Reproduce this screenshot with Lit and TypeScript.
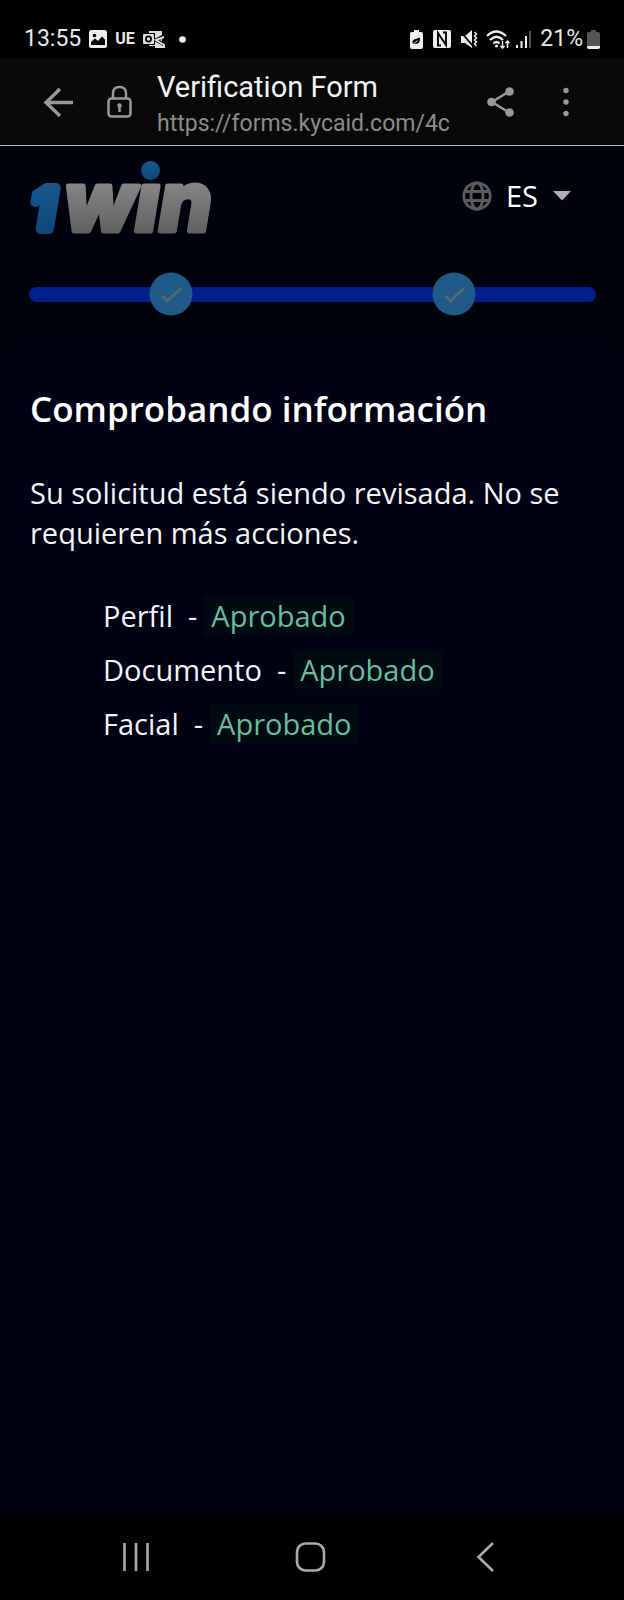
import { LitElement, html, css, svg } from "lit";
import { customElement, state } from "lit/decorators.js";

interface Check {
  name: string;
  status: string;
}

@customElement("status-bar")
class StatusBar extends LitElement {
  static styles = css`
    :host {
      display: flex;
      align-items: center;
      justify-content: space-between;
      box-sizing: border-box;
      height: 58px;
      padding: 20px 24px 0 24px;
      background: #000;
      color: #e8e8e8;
      font: 23px/38px Roboto, sans-serif;
    }
    .group {
      display: flex;
      align-items: center;
    }
    .left {
      gap: 8px;
    }
    .region {
      font: 700 16px/38px Roboto, sans-serif;
    }
    .level {
      margin-left: 9px;
      margin-right: 4px;
    }
    svg {
      display: block;
    }
    .dot {
      margin-left: 6px;
    }
    .eco {
      margin-right: 10px;
    }
    .nfc {
      margin-right: 9px;
    }
    .mute {
      margin-right: 8px;
    }
    .wifi {
      margin-right: 6px;
    }
  `;

  render() {
    return html`
      <div class="group left">
        <span class="time">13:55</span>
        <svg width="18" height="18" viewBox="0 0 18 18">
          <rect width="18" height="18" rx="2.5" fill="#eee" />
          <circle cx="5.5" cy="5.5" r="1.8" fill="#000" />
          <path d="M2 15v-3l4-3.500 3 2.500 4-4.500 3 3v5.500z" fill="#000" />
        </svg>
        <span class="region">UE</span>
        <svg width="22" height="18" viewBox="0 0 22 18">
          <path d="M6 1h13v15H6z" fill="#ddd" />
          <path d="M22 5.500l-9 4.500 9 5" fill="none" stroke="#000" stroke-width="3.600" />
          <rect x="-1" y="3" width="13" height="12" fill="#000" />
          <rect x="0" y="4" width="11" height="10" rx="1" fill="#ddd" />
          <circle cx="5.500" cy="9" r="2.600" fill="none" stroke="#000" stroke-width="1.700" />
          <path d="M21 7l-8 3 8 5v2H12" fill="none" stroke="#ddd" stroke-width="2" />
        </svg>
        <svg class="dot" width="7" height="7" viewBox="0 0 7 7"><circle cx="3.500" cy="3.500" r="3.300" fill="#eee" /></svg>
      </div>
      <div class="group">
        <svg class="eco" width="13" height="19" viewBox="0 0 13 19">
          <path d="M4 0h5v2h2.500Q13 2 13 4v13q0 2-2 2H2q-2 0-2-2V4q0-2 1.500-2H4z" fill="#eee" />
          <path d="M2.500 13.500q-.5-4 3-4.500L10 7.500q.5 6-4 6.500l-2-.2z" fill="#000" />
          <path d="M3 14.500l4.500-4" stroke="#eee" />
        </svg>
        <svg class="nfc" width="18" height="18" viewBox="0 0 18 18">
          <rect width="18" height="18" rx="2" fill="#eee" />
          <path d="M8 15.500H5V3l8 12V2.500h-3" fill="none" stroke="#000" stroke-width="1.900" />
        </svg>
        <svg class="mute" width="18" height="18" viewBox="0 0 18 18">
          <path d="M1 6h4l7-6v18l-7-5H1z" fill="#eee" />
          <path d="M0 1l13 15" stroke="#000" stroke-width="1.800" />
          <path d="M14.500 2l2 2-2 2 2 2-2 2 2 2-2 2 2 2" fill="none" stroke="#eee" stroke-width="1.500" />
        </svg>
        <svg class="wifi" width="24" height="19" viewBox="0 0 24 19" fill="none" stroke="#eee" stroke-width="2.300">
          <path d="M1 6q9-9 19 0M4 10q6.500-6.500 13 0M7.500 13.500q3-3 6 0" />
          <circle cx="10.500" cy="16" r="1.500" fill="#eee" stroke="none" />
          <path d="M16.500 11v7M14.500 16l2 2 2-2M21.500 18v-7M19.500 13l2-2 2 2" stroke-width="1.500" />
        </svg>
        <svg width="15" height="18" viewBox="0 0 15 18">
          <path d="M1 15v3M5.500 11v7M10 6v12" stroke="#eee" stroke-width="2" />
          <path d="M14 1v17" stroke="#555" stroke-width="2" />
        </svg>
        <span class="level">21%</span>
        <svg width="13" height="19" viewBox="0 0 13 19">
          <path d="M4 0h5v2h2q2 0 2 2v13q0 2-2 2H2q-2 0-2-2V4q0-2 2-2h2z" fill="#555" />
          <path d="M0 16h13v1q0 2-2 2H2q-2 0-2-2z" fill="#eee" />
        </svg>
      </div>
    `;
  }
}

@customElement("browser-bar")
class BrowserBar extends LitElement {
  static styles = css`
    :host {
      display: flex;
      align-items: center;
      box-sizing: border-box;
      height: 88px;
      padding: 0 40px;
      background: #090909;
      border-bottom: 1px solid #a9bfc0;
      font-family: Roboto, sans-serif;
    }
    button {
      display: flex;
      padding: 0;
      border: 0;
      background: none;
      color: #999;
    }
    svg {
      display: block;
    }
    .lock {
      margin-left: 31px;
    }
    .page {
      flex: 1;
      min-width: 0;
      margin-left: 24px;
      padding-top: 8px;
      white-space: nowrap;
    }
    .title {
      color: #f4f4f4;
      font-size: 29px;
      line-height: 36px;
    }
    .url {
      color: #8c8c8c;
      font-size: 23px;
      line-height: 38px;
    }
    .more {
      margin-left: 34px;
    }
  `;

  render() {
    return html`
      <button aria-label="Atrás">
        <svg width="36" height="36" viewBox="0 0 36 36" fill="none" stroke="currentColor" stroke-width="3.400">
          <path d="M20 5L6 18.500 20 32M6 18.500h27" />
        </svg>
      </button>
      <button class="lock" aria-label="Seguridad">
        <svg width="26" height="36" viewBox="0 0 26 36" fill="none" stroke="currentColor" stroke-width="2.500">
          <rect x="1.500" y="14.500" width="22" height="18" rx="3" />
          <path d="M6 14V9.500q0-6.500 6.500-6.500T19 9.500V14" />
          <path d="M12.500 22v6" /><circle cx="12.500" cy="21.500" r="1" />
        </svg>
      </button>
      <div class="page">
        <div class="title">Verification Form</div>
        <div class="url">https://forms.kycaid.com/4c</div>
      </div>
      <button aria-label="Compartir">
        <svg width="27" height="32" viewBox="0 0 27 32" fill="currentColor">
          <path d="M22 5.500L5 16l17 10.500" fill="none" stroke="currentColor" stroke-width="2.600" />
          <circle cx="4.500" cy="16" r="4.300" /><circle cx="22.500" cy="5.500" r="4.300" /><circle cx="22.500" cy="26.500" r="4.300" />
        </svg>
      </button>
      <button class="more" aria-label="Más opciones">
        <svg width="36" height="32" viewBox="0 0 36 32" fill="currentColor">
          <circle cx="18" cy="4.500" r="2.700" /><circle cx="18" cy="16" r="2.700" /><circle cx="18" cy="27.500" r="2.700" />
        </svg>
      </button>
    `;
  }
}

@customElement("form-header")
class FormHeader extends LitElement {
  static styles = css`
    :host {
      display: block;
      padding: 14px 28px 30px 29px;
      background: #00020e;
    }
    .top {
      display: flex;
      align-items: flex-start;
      justify-content: space-between;
    }
    svg {
      display: block;
    }
    .logo {
      overflow: visible;
    }
    .brand {
      font-family: Inter, sans-serif;
      font-style: italic;
    }
    .digit {
      font-size: 56px;
      font-weight: 700;
    }
    .word {
      font-size: 83px;
      font-weight: 800;
    }
    .language {
      display: flex;
      align-items: center;
      margin-top: 17px;
      margin-right: 25px;
    }
    .globe {
      margin-right: 14px;
    }
    select {
      appearance: none;
      padding: 0;
      border: 0;
      background: none;
      color: #fff;
      font: 29px/38px "Open Sans", sans-serif;
    }
    .caret {
      margin-left: 14px;
    }
    .progress {
      display: grid;
      grid-template-columns: 1fr 1fr;
      align-items: center;
      justify-items: center;
      height: 43px;
      margin-top: 36px;
    }
    .track {
      grid-area: 1 / 1 / 2 / 3;
      justify-self: stretch;
      height: 15px;
      border-radius: 8px;
      background: #00208c;
    }
    .first {
      grid-area: 1 / 1;
    }
    .second {
      grid-area: 1 / 2;
    }
  `;

  private step(name: string) {
    return html`
      <svg class=${name} width="44" height="44" viewBox="0 0 44 44">
        <circle cx="22" cy="22" r="21.500" fill="#205a88" />
        <path d="M13 23.500l5.500 5.500L32 16" fill="none" stroke="#55676f" stroke-width="2.800" />
      </svg>
    `;
  }

  render() {
    return html`
      <div class="top">
        <svg class="logo" width="186" height="76" viewBox="0 0 186 76" role="img" aria-label="1win">
          <defs>
            <linearGradient id="grey" x1="0" y1="24" x2="0" y2="74" gradientUnits="userSpaceOnUse">
              <stop offset="0" stop-color="#858585" />
              <stop offset="1" stop-color="#606060" />
            </linearGradient>
            <linearGradient id="blue" x1="0" y1="0" x2="0" y2="1">
              <stop offset="0" stop-color="#175a92" /><stop offset="1" stop-color="#0d4579" />
            </linearGradient>
          </defs>
          <g class="brand" stroke-linejoin="round">
            <text class="word" x="35" y="71" fill="url(#grey)" stroke="url(#grey)" stroke-width="5">wın</text>
            <text class="digit" x="2" y="69" fill="#00020e" stroke="#00020e" stroke-width="17">1</text>
            <text class="digit" x="2" y="69" fill="url(#blue)" stroke="url(#blue)" stroke-width="10">1</text>
          </g>
          <circle cx="121.500" cy="10.500" r="9.500" fill="url(#blue)" />
        </svg>
        <div class="language">
          <svg class="globe" width="30" height="30" viewBox="0 0 30 30" fill="none" stroke="#5c5c5c" stroke-width="2.800">
            <circle cx="15" cy="15" r="13.200" />
            <ellipse cx="15" cy="15" rx="6" ry="13.200" />
            <path d="M2.500 10.500h25M2.500 19.500h25" />
          </svg>
          <select aria-label="Idioma">
            <option selected>ES</option>
          </select>
          <svg class="caret" width="18" height="10" viewBox="0 0 18 10"><path d="M0 0h18l-9 9.500z" fill="#b5adb5" /></svg>
        </div>
      </div>
      <div class="progress">
        <div class="track"></div>
        ${this.step("first")}${this.step("second")}
      </div>
    `;
  }
}

@customElement("navigation-bar")
class NavigationBar extends LitElement {
  static styles = css`
    :host {
      display: grid;
      grid-template-columns: 1fr 1fr 1fr;
      align-items: center;
      justify-items: center;
      height: 87px;
      padding: 0 49px 0 48px;
      background: #000;
    }
    button {
      display: flex;
      padding: 0;
      border: 0;
      background: none;
    }
  `;

  render() {
    const shapes = [
      { label: "Recientes", shape: svg`<path d="M4.500 1v28M16 1v28M27.500 1v28" />` },
      { label: "Inicio", shape: svg`<rect x="2" y="1.500" width="27" height="27" rx="8.500" />` },
      { label: "Volver", shape: svg`<path d="M22 1L7.500 15 22 29" />` },
    ];
    return shapes.map(
      (item) => html`
        <button aria-label=${item.label}>
          <svg width="32" height="30" viewBox="0 0 32 30" fill="none" stroke="#aaa" stroke-width="2.600">${item.shape}</svg>
        </button>
      `
    );
  }
}

@customElement("app-root")
class AppRoot extends LitElement {
  static styles = css`
    :host {
      display: flex;
      flex-direction: column;
      min-height: 100vh;
      background: #00020e;
      color: #f4f4f6;
      font: 29px/40px "Open Sans", sans-serif;
    }
    main {
      flex: 1;
      padding: 40px 30px 0;
      border-radius: 24px 24px 0 0;
      background: #000213;
    }
    h1 {
      margin: 0;
      color: #fff;
      font-size: 35px;
      font-weight: 600;
      line-height: 48px;
    }
    p {
      margin: 40px 0 0;
    }
    ul {
      margin: 36px 0 0;
      padding: 0 0 0 73px;
      list-style: none;
    }
    li {
      display: flex;
      align-items: center;
      height: 54px;
    }
    .dash {
      margin: 0 7px 0 15px;
    }
    .chip {
      padding: 0 7px;
      line-height: 38px;
      border-radius: 2px;
      background: #000a11;
      color: #67bd9d;
    }
  `;

  @state() private checks: Check[] = [
    { name: "Perfil", status: "Aprobado" },
    { name: "Documento", status: "Aprobado" },
    { name: "Facial", status: "Aprobado" },
  ];

  render() {
    return html`
      <status-bar></status-bar>
      <browser-bar></browser-bar>
      <form-header></form-header>
      <main>
        <h1>Comprobando información</h1>
        <p>Su solicitud está siendo revisada. No se requieren más acciones.</p>
        <ul>
          ${this.checks.map(
            (check) => html`<li>
              <span>${check.name}</span><span class="dash">-</span><span class="chip">${check.status}</span>
            </li>`
          )}
        </ul>
      </main>
      <navigation-bar></navigation-bar>
    `;
  }
}
